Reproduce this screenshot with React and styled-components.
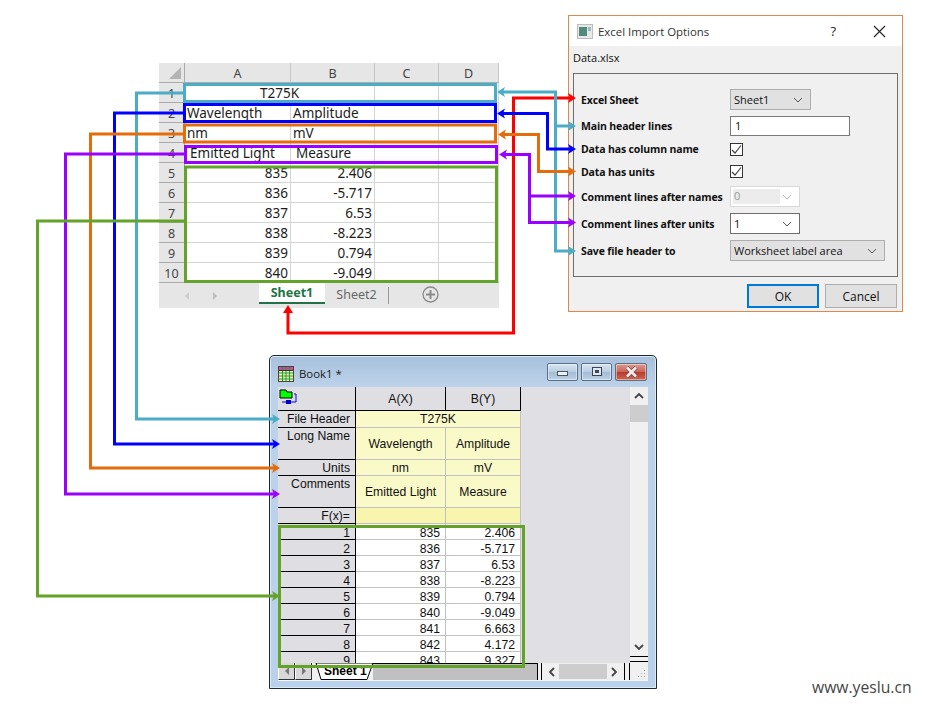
import React from 'react';
import styled, { createGlobalStyle } from 'styled-components';

const Global = createGlobalStyle`
  html, body { margin: 0; padding: 0; background: #fff; }
  * { box-sizing: border-box; }
`;

const Canvas = styled.div`
  position: relative;
  width: 925px;
  height: 706px;
  overflow: hidden;
  background: #fff;
`;

/* ---------- Excel ---------- */
const ExcelWindow = styled.div`
  position: absolute;
  left: 159px;
  top: 63px;
  width: 340px;
  height: 245px;
  background: #e6e6e6;
  display: flex;
  flex-direction: column;
  font-family: "Noto Sans", sans-serif;
`;
const ExcelGrid = styled.div`
  display: grid;
  grid-template-columns: 26px 106px 84px 64px 60px;
  grid-template-rows: 20px repeat(10, 20px);
  height: 219px;
  overflow: hidden;
  background: #fff;
  font-size: 13.5px;
  color: #1c1c1c;
`;
const ColHead = styled.div`
  background: #e6e6e6;
  border-right: 1px solid #c6c6c6;
  border-bottom: 1px solid #ababab;
  display: flex;
  align-items: center;
  justify-content: center;
  color: #444;
  font-size: 12.5px;
  padding-top: 2px;
`;
const Corner = styled.div`
  background: #e6e6e6;
  border-right: 1px solid #ababab;
  border-bottom: 1px solid #ababab;
  display: flex;
  align-items: flex-end;
  justify-content: flex-end;
  padding: 0 3px 3px 0;
`;
const RowHead = styled.div`
  background: #e6e6e6;
  border-right: 1px solid #ababab;
  border-bottom: 1px solid #ababab;
  display: flex;
  align-items: center;
  justify-content: center;
  color: #444;
  font-size: 12.5px;
  padding-top: 2px;
`;
const XCell = styled.div`
  border-right: 1px solid #d4d4d4;
  border-bottom: 1px solid #d4d4d4;
  display: flex;
  align-items: center;
  white-space: nowrap;
  overflow: hidden;
  grid-column: ${p => (p.$span ? `span ${p.$span}` : 'auto')};
  justify-content: ${p => (p.$align === 'right' ? 'flex-end' : p.$align === 'center' ? 'center' : 'flex-start')};
  padding: 2px 2px 0 ${p => p.$indent || 2}px;
  line-height: 1;
`;
const TabBar = styled.div`
  flex: 1;
  display: flex;
  align-items: flex-start;
  border-top: 1px solid #ababab;
  font-size: 12.5px;
`;
const NavArrows = styled.div`
  width: 100px;
  height: 100%;
  display: flex;
  align-items: center;
  gap: 22px;
  padding-left: 25px;
`;
const ActiveTab = styled.div`
  width: 66px;
  height: 21px;
  background: #fff;
  border-bottom: 2px solid #217346;
  color: #217346;
  font-weight: 700;
  text-align: center;
  line-height: 19px;
`;
const IdleTab = styled.div`
  width: 64px;
  height: 17px;
  margin-top: 4px;
  color: #666;
  text-align: center;
  line-height: 15px;
  border-right: 1px solid #9a9a9a;
`;
const AddSheet = styled.div`
  margin: 3px 0 0 33px;
  display: flex;
`;

/* ---------- Dialog ---------- */
const Dialog = styled.div`
  position: absolute;
  left: 568px;
  top: 15px;
  width: 335px;
  height: 297px;
  border: 1px solid #d98a4c;
  background: #f0f0f0;
  display: flex;
  flex-direction: column;
  font-family: "Open Sans", sans-serif;
  color: #111;
`;
const DialogTitle = styled.div`
  height: 30px;
  background: #fff;
  display: flex;
  align-items: center;
  padding: 0 16px 0 8px;
  font-size: 11.4px;
  color: #333;
`;
const TitleText = styled.span`
  margin-left: 5px;
  flex: 1;
`;
const Help = styled.span`
  font-size: 13px;
  margin-right: 37px;
  color: #222;
`;
const FileName = styled.div`
  font-size: 11px;
  padding: 4px 0 0 4px;
  height: 27px;
  line-height: 16px;
`;
const GroupBox = styled.div`
  margin-left: 4px;
  width: 325px;
  height: 204px;
  border: 1px solid #6e6e6e;
  padding-top: 12px;
  display: flex;
  flex-direction: column;
`;
const OptionRow = styled.div`
  display: grid;
  grid-template-columns: 149px 1fr;
  align-items: center;
  height: ${p => p.$h}px;
  padding-left: 7px;
`;
const OptionLabel = styled.span`
  font-size: 10.5px;
  font-weight: 700;
  letter-spacing: -0.15px;
  white-space: nowrap;
`;
const SelectBox = styled.div`
  width: ${p => p.$w}px;
  height: ${p => p.$h || 21}px;
  display: flex;
  align-items: center;
  justify-content: space-between;
  padding: 0 7px 0 3px;
  font-size: 11px;
  background: ${p => (p.$variant === 'white' ? '#fff' : p.$variant === 'off' ? '#fff' : '#e1e1e1')};
  border: 1px solid ${p => (p.$variant === 'white' ? '#6e6e6e' : p.$variant === 'off' ? '#d9d9d9' : '#adadad')};
  color: ${p => (p.$variant === 'off' ? '#9a9a9a' : '#111')};
`;
const OffValue = styled.span`
  background: #ececec;
  width: 47px;
  height: 15px;
  line-height: 14px;
  margin-left: -1px;
  padding-left: 1px;
`;
const TextBox = styled.div`
  width: 120px;
  height: 20px;
  background: #fff;
  border: 1px solid #7a7a7a;
  padding-left: 4px;
  font-size: 11px;
  line-height: 17px;
`;
const Check = styled.div`
  width: 13px;
  height: 13px;
  background: #fff;
  border: 1px solid #333;
  display: flex;
  align-items: center;
  justify-content: center;
`;
const ButtonRow = styled.div`
  display: flex;
  justify-content: flex-end;
  gap: 6px;
  margin: 7px 5px 0 0;
`;
const DlgButton = styled.div`
  width: 72px;
  height: 24px;
  background: #e1e1e1;
  border: ${p => (p.$primary ? '2px solid #0078d7' : '1px solid #adadad')};
  font-size: 12px;
  display: flex;
  align-items: center;
  justify-content: center;
`;

/* ---------- Origin ---------- */
const BookWindow = styled.div`
  position: absolute;
  left: 269px;
  top: 355px;
  width: 388px;
  height: 334px;
  border: 1px solid #1c2a33;
  border-radius: 5px 5px 0 0;
  background: linear-gradient(180deg, #a6c0dc 0, #bcd2e9 30px, #b9d1ea 100%);
  padding: 0 8px 7px;
  display: flex;
  flex-direction: column;
  box-shadow: inset 0 0 0 1px #dbe8f5;
`;
const BookTitle = styled.div`
  height: 31px;
  flex: none;
  display: flex;
  align-items: center;
  padding-top: 4px;
  font-family: "Open Sans", sans-serif;
  font-size: 11.4px;
  color: #1a1a1a;
`;
const BookName = styled.span`
  margin-left: 5px;
  flex: 1;
`;
const WinButtons = styled.div`
  display: flex;
  gap: 3px;
  margin: -4px 1px 0 0;
`;
const WinButton = styled.div`
  width: ${p => (p.$close ? 32 : 31)}px;
  height: 18px;
  border: 1px solid #5c6f83;
  border-radius: 2px;
  box-shadow: inset 0 0 0 1px rgba(255, 255, 255, 0.45);
  background: ${p =>
    p.$close
      ? 'linear-gradient(180deg, #dd9a90 0, #c9665a 48%, #b83a2c 52%, #cc6a58 100%)'
      : 'linear-gradient(180deg, #d7e4f2 0, #b9cde2 48%, #a4bcd6 52%, #bcd0e6 100%)'};
  display: flex;
  align-items: center;
  justify-content: center;
`;
const BookBody = styled.div`
  flex: 1;
  background: #dfdfe4;
  display: flex;
  flex-direction: column;
  border: 1px solid #f4f8fc;
  border-width: 0 0 1px 0;
  min-height: 0;
`;
const BookMain = styled.div`
  height: 276px;
  flex: none;
  display: flex;
  justify-content: space-between;
`;
const SheetGrid = styled.div`
  display: grid;
  grid-template-columns: 78px 90px 75px;
  grid-template-rows: 24px 17px 32px 16px 32px 16px repeat(10, 16px);
  height: 276px;
  overflow: hidden;
  font-family: "Liberation Sans", sans-serif;
  font-size: 12.2px;
  color: #111;
`;
const SideCell = styled.div`
  background: #dedee3;
  border-right: 1px solid #000;
  border-bottom: 1px solid #000;
  display: flex;
  justify-content: flex-end;
  align-items: ${p => (p.$top ? 'flex-start' : 'center')};
  padding: ${p => (p.$top ? '1px' : p.$data ? '2px' : '0')} 5px 0 0;
  line-height: 14px;
  white-space: nowrap;
`;
const CornerCell = styled(SideCell)`
  justify-content: flex-start;
  align-items: flex-start;
  padding: 2px 0 0 1px;
`;
const HeadCell = styled.div`
  background: #dedee3;
  border-right: 1px solid #000;
  border-bottom: 1px solid #000;
  display: flex;
  align-items: center;
  justify-content: center;
`;
const MetaCell = styled.div`
  background: ${p => p.$bg || '#fafac8'};
  border-right: 1px solid #c0c0c0;
  border-bottom: 1px solid #c0c0c0;
  display: flex;
  align-items: center;
  justify-content: center;
  white-space: nowrap;
  grid-column: ${p => (p.$span ? `span ${p.$span}` : 'auto')};
`;
const DataCell = styled.div`
  background: #fff;
  border-right: 1px solid #c0c0c0;
  border-bottom: 1px solid #c0c0c0;
  display: flex;
  align-items: center;
  justify-content: flex-end;
  padding: 2px 5px 0 0;
`;
const VScroll = styled.div`
  width: 18px;
  background: #f0f0f0;
  display: flex;
  flex-direction: column;
  align-items: stretch;
`;
const ScrollArrowBox = styled.div`
  height: 18px;
  display: flex;
  align-items: center;
  justify-content: center;
`;
const ScrollThumb = styled.div`
  height: 17px;
  background: #cdcdcd;
`;
const ScrollFill = styled.div`
  flex: 1;
`;
const Splitter = styled.div`
  height: 6px;
  border-top: 1px solid #000;
  border-bottom: 1px solid #000;
  margin: 0 0 1px 0;
  background: #f0f0f0;
`;
const BottomBar = styled.div`
  height: 17px;
  flex: none;
  display: flex;
  background: #f0f0f0;
  font-family: "Liberation Sans", sans-serif;
`;
const NavBtn = styled.div`
  width: 17px;
  height: 100%;
  background: #d8d8d8;
  border-right: 1px solid #333;
  border-bottom: 1px solid #333;
  border-left: 1px solid #fff;
  display: flex;
  align-items: center;
  justify-content: center;
`;
const SheetTab = styled.div`
  position: relative;
  width: 60px;
  height: 100%;
  margin-left: 3px;
  flex: none;
  font-size: 12px;
  font-weight: 700;
  line-height: 17px;
  padding-left: 9px;
  color: #000;
`;
const TabShape = styled.svg`
  position: absolute;
  left: 0;
  top: 0;
`;
const TabLabel = styled.span`
  position: relative;
`;
const TabTrough = styled.div`
  flex: 1;
  background: #c0c0c0;
  margin-left: -2px;
  border-top: 1px solid #000;
`;
const Divider = styled.div`
  width: ${p => p.$w}px;
  flex: none;
  border-left: 1px solid #000;
  border-right: 1px solid #000;
`;
const HScroll = styled.div`
  width: 82px;
  flex: none;
  display: flex;
  align-items: center;
  justify-content: space-between;
  padding: 0 5px;
  background: #f0f0f0;
`;
const HThumb = styled.div`
  width: 48px;
  height: 15px;
  background: #cdcdcd;
`;
const Sizer = styled.div`
  flex: none;
  width: 18px;
  display: flex;
  align-items: flex-end;
  justify-content: flex-end;
  padding: 0 2px 2px 0;
`;

const Watermark = styled.div`
  position: absolute;
  left: 812px;
  top: 676px;
  font-family: "Open Sans", sans-serif;
  font-size: 15.7px;
  color: #444;
`;

const Overlay = styled.svg`
  position: absolute;
  left: 0;
  top: 0;
  pointer-events: none;
`;

/* ---------- drawings ---------- */
const Chevron = ({ color = '#555', size = 10, dir = 'down', sw = 1 }) => {
  const d = {
    down: 'M1 3 L5 7 L9 3',
    up: 'M1 7 L5 3 L9 7',
    left: 'M7 1 L3 5 L7 9',
    right: 'M3 1 L7 5 L3 9',
  }[dir];
  return (
    <svg width={size} height={size} viewBox="0 0 10 10">
      <path d={d} fill="none" stroke={color} strokeWidth={sw} />
    </svg>
  );
};

const Tick = () => (
  <svg width="11" height="11" viewBox="0 0 11 11">
    <path d="M1 6 L4 9 L10 1.5" fill="none" stroke="#444" strokeWidth="1.2" />
  </svg>
);

const Arrow = ({ color, x, y, dir }) => {
  const s = dir === 'r' ? 1 : -1;
  if (dir === 'u') {
    return <polygon fill={color} points={`${x},${y} ${x - 5},${y + 8} ${x + 5},${y + 8}`} />;
  }
  return (
    <polygon
      fill={color}
      points={`${x},${y} ${x - s * 8},${y - 5} ${x - s * 6},${y} ${x - s * 8},${y + 5}`}
    />
  );
};

const LB = '#4bacc6';
const BL = '#0000ff';
const OR = '#e46c0a';
const PU = '#9900ff';
const GR = '#63a32a';
const RD = '#ff0000';

const Line = ({ c, p }) => (
  <polyline points={p} fill="none" stroke={c} strokeWidth="3" />
);
const Frame = ({ c, x, y, w, h }) => (
  <rect x={x} y={y} width={w} height={h} fill="none" stroke={c} strokeWidth="3" />
);

const Connectors = () => (
  <Overlay width="925" height="706" viewBox="0 0 925 706">
    <Frame c={LB} x={184.5} y={84.5} w={311} h={17} />
    <Frame c={BL} x={184.5} y={104.5} w={311} h={17} />
    <Frame c={OR} x={184.5} y={125} w={311} h={17} />
    <Frame c={PU} x={185.5} y={146.5} w={311} h={16} />
    <Frame c={GR} x={185.5} y={167} w={311} h={114.5} />
    <Frame c={GR} x={279.5} y={526.5} w={244} h={140} />

    <Line c={LB} p="184,93 136.5,93 136.5,419 274,419" />
    <Arrow color={LB} x={280} y={419} dir="r" />
    <Line c={BL} p="184,113 114.5,113 114.5,444 274,444" />
    <Arrow color={BL} x={280} y={444} dir="r" />
    <Line c={OR} p="184,134 90.5,134 90.5,468 274,468" />
    <Arrow color={OR} x={280} y={468} dir="r" />
    <Line c={PU} p="184,154 65.5,154 65.5,494 274,494" />
    <Arrow color={PU} x={280} y={494} dir="r" />
    <Line c={GR} p="184,221 37.5,221 37.5,596 274,596" />
    <Arrow color={GR} x={280} y={596} dir="r" />

    <Line c={RD} p="288,312 288,333 513.5,333 513.5,98 571,98" />
    <Arrow color={RD} x={288} y={305} dir="u" />
    <Arrow color={RD} x={576} y={98} dir="r" />

    <Line c={LB} p="503,92 555.5,92 555.5,251 571,251" />
    <Line c={LB} p="555,126 571,126" />
    <Arrow color={LB} x={497} y={92} dir="l" />
    <Arrow color={LB} x={576} y={126} dir="r" />
    <Arrow color={LB} x={576} y={251} dir="r" />

    <Line c={BL} p="503,113.5 547.5,113.5 547.5,149 571,149" />
    <Arrow color={BL} x={497} y={113.5} dir="l" />
    <Arrow color={BL} x={576} y={149} dir="r" />

    <Line c={OR} p="504,134.5 538.5,134.5 538.5,171.5 571,171.5" />
    <Arrow color={OR} x={498} y={134.5} dir="l" />
    <Arrow color={OR} x={576} y={171.5} dir="r" />

    <Line c={PU} p="505,154.5 529.5,154.5 529.5,222.5 571,222.5" />
    <Line c={PU} p="529,196 571,196" />
    <Arrow color={PU} x={499} y={154.5} dir="l" />
    <Arrow color={PU} x={576} y={196} dir="r" />
    <Arrow color={PU} x={576} y={222.5} dir="r" />
  </Overlay>
);

/* ---------- data ---------- */
const excelRows = [
  ['835', '2.406'],
  ['836', '-5.717'],
  ['837', '6.53'],
  ['838', '-8.223'],
  ['839', '0.794'],
  ['840', '-9.049'],
];
const bookRows = [
  ['835', '2.406'],
  ['836', '-5.717'],
  ['837', '6.53'],
  ['838', '-8.223'],
  ['839', '0.794'],
  ['840', '-9.049'],
  ['841', '6.663'],
  ['842', '4.172'],
  ['843', '9.327'],
];

const Excel = () => (
  <ExcelWindow>
    <ExcelGrid>
      <Corner>
        <svg width="12" height="12" viewBox="0 0 12 12">
          <polygon points="12,0 12,12 0,12" fill="#b4b4b4" />
        </svg>
      </Corner>
      {['A', 'B', 'C', 'D'].map(c => <ColHead key={c}>{c}</ColHead>)}

      <RowHead>1</RowHead>
      <XCell $span={2} $align="center">T275K</XCell>
      <XCell /><XCell />

      <RowHead>2</RowHead>
      <XCell $indent={2}>Wavelength</XCell>
      <XCell $indent={2}>Amplitude</XCell>
      <XCell /><XCell />

      <RowHead>3</RowHead>
      <XCell $indent={2}>nm</XCell>
      <XCell $indent={2}>mV</XCell>
      <XCell /><XCell />

      <RowHead>4</RowHead>
      <XCell $indent={5}>Emitted Light</XCell>
      <XCell $indent={5}>Measure</XCell>
      <XCell /><XCell />

      {excelRows.map((r, i) => (
        <React.Fragment key={r[0]}>
          <RowHead>{i + 5}</RowHead>
          <XCell $align="right">{r[0]}</XCell>
          <XCell $align="right">{r[1]}</XCell>
          <XCell /><XCell />
        </React.Fragment>
      ))}
    </ExcelGrid>
    <TabBar>
      <NavArrows>
        <svg width="6" height="8" viewBox="0 0 6 8"><polygon points="5,0 5,8 1,4" fill="#cfcfcf" /></svg>
        <svg width="6" height="8" viewBox="0 0 6 8"><polygon points="1,0 1,8 5,4" fill="#bdbdbd" /></svg>
      </NavArrows>
      <ActiveTab>Sheet1</ActiveTab>
      <IdleTab>Sheet2</IdleTab>
      <AddSheet>
        <svg width="17" height="17" viewBox="0 0 17 17">
          <circle cx="8.5" cy="8.5" r="7.5" fill="none" stroke="#8a8a8a" strokeWidth="1.3" />
          <path d="M8.5 4 V13 M4 8.5 H13" stroke="#8a8a8a" strokeWidth="2" />
        </svg>
      </AddSheet>
    </TabBar>
  </ExcelWindow>
);

const ImportDialog = () => (
  <Dialog>
    <DialogTitle>
      <svg width="16" height="15" viewBox="0 0 16 15">
        <rect x="0.5" y="0.5" width="15" height="14" fill="#e8e8e8" stroke="#bdbdbd" />
        <rect x="2" y="3" width="8" height="9" fill="#4f8a7a" />
        <rect x="11" y="3" width="3" height="4" fill="#9db8c8" />
      </svg>
      <TitleText>Excel Import Options</TitleText>
      <Help>?</Help>
      <svg width="13" height="13" viewBox="0 0 13 13">
        <path d="M1 1 L12 12 M12 1 L1 12" stroke="#222" strokeWidth="1.1" />
      </svg>
    </DialogTitle>
    <FileName>Data.xlsx</FileName>
    <GroupBox>
      <OptionRow $h={27}>
        <OptionLabel>Excel Sheet</OptionLabel>
        <SelectBox $w={81}>Sheet1<Chevron /></SelectBox>
      </OptionRow>
      <OptionRow $h={25}>
        <OptionLabel>Main header lines</OptionLabel>
        <TextBox>1</TextBox>
      </OptionRow>
      <OptionRow $h={22}>
        <OptionLabel>Data has column name</OptionLabel>
        <Check><Tick /></Check>
      </OptionRow>
      <OptionRow $h={23}>
        <OptionLabel>Data has units</OptionLabel>
        <Check><Tick /></Check>
      </OptionRow>
      <OptionRow $h={27}>
        <OptionLabel>Comment lines after names</OptionLabel>
        <SelectBox $w={70} $variant="off"><OffValue>0</OffValue><Chevron color="#bbb" /></SelectBox>
      </OptionRow>
      <OptionRow $h={27}>
        <OptionLabel>Comment lines after units</OptionLabel>
        <SelectBox $w={70} $variant="white">1<Chevron /></SelectBox>
      </OptionRow>
      <OptionRow $h={27}>
        <OptionLabel>Save file header to</OptionLabel>
        <SelectBox $w={155}>Worksheet label area<Chevron /></SelectBox>
      </OptionRow>
    </GroupBox>
    <ButtonRow>
      <DlgButton $primary>OK</DlgButton>
      <DlgButton>Cancel</DlgButton>
    </ButtonRow>
  </Dialog>
);

const SheetIcon = () => (
  <svg width="16" height="16" viewBox="0 0 16 16">
    <rect x="0.5" y="0.5" width="15" height="15" fill="#f6f6a8" stroke="#444" />
    <rect x="1" y="1" width="14" height="3" fill="#c84aa0" />
    <path d="M1 7 H15 M1 10 H15 M1 13 H15 M4.5 1 V15 M8 1 V15 M11.5 1 V15" stroke="#1f9a3a" strokeWidth="1" />
    <path d="M1 4.5 H15" stroke="#333" />
  </svg>
);

const FolderIcon = () => (
  <svg width="18" height="18" viewBox="0 0 18 18">
    <path d="M1 1 H7 L8 3 H13 V9 H1 Z" fill="#00ff00" stroke="#000" strokeWidth="1" />
    <path d="M15 5 H17 V13 H9" fill="none" stroke="#0000ff" />
    <rect x="7" y="11" width="5" height="4" fill="#0000c8" />
    <path d="M3 13 H7" stroke="#0000ff" />
  </svg>
);

const Book = () => (
  <BookWindow>
    <BookTitle>
      <SheetIcon />
      <BookName>Book1 *</BookName>
      <WinButtons>
        <WinButton>
          <svg width="12" height="8" viewBox="0 0 12 8">
            <rect x="0.5" y="3.5" width="10" height="4" fill="#eef2f6" stroke="#4a5866" />
          </svg>
        </WinButton>
        <WinButton>
          <svg width="12" height="10" viewBox="0 0 12 10">
            <rect x="1.5" y="0.5" width="9" height="8" fill="#dfe8f2" stroke="#3a4652" />
            <rect x="4" y="3" width="4" height="3" fill="#3a4652" />
          </svg>
        </WinButton>
        <WinButton $close>
          <svg width="15" height="12" viewBox="0 0 15 12">
            <path d="M3 1.5 L12 10.5 M12 1.5 L3 10.5" stroke="#7a4a44" strokeWidth="4" />
            <path d="M3 1.5 L12 10.5 M12 1.5 L3 10.5" stroke="#eee" strokeWidth="2.6" />
          </svg>
        </WinButton>
      </WinButtons>
    </BookTitle>
    <BookBody>
      <BookMain>
        <SheetGrid>
          <CornerCell><FolderIcon /></CornerCell>
          <HeadCell>A(X)</HeadCell>
          <HeadCell>B(Y)</HeadCell>

          <SideCell>File Header</SideCell>
          <MetaCell $span={2}>T275K</MetaCell>

          <SideCell $top>Long Name</SideCell>
          <MetaCell>Wavelength</MetaCell>
          <MetaCell>Amplitude</MetaCell>

          <SideCell>Units</SideCell>
          <MetaCell>nm</MetaCell>
          <MetaCell>mV</MetaCell>

          <SideCell $top>Comments</SideCell>
          <MetaCell>Emitted Light</MetaCell>
          <MetaCell>Measure</MetaCell>

          <SideCell>F(x)=</SideCell>
          <MetaCell $bg="#f7f5ae" />
          <MetaCell $bg="#f7f5ae" />

          {bookRows.map((r, i) => (
            <React.Fragment key={r[0]}>
              <SideCell $data>{i + 1}</SideCell>
              <DataCell>{r[0]}</DataCell>
              <DataCell>{r[1]}</DataCell>
            </React.Fragment>
          ))}
        </SheetGrid>
        <VScroll>
          <ScrollArrowBox><Chevron color="#444" dir="up" sw={1.8} /></ScrollArrowBox>
          <ScrollThumb />
          <ScrollFill />
          <ScrollArrowBox><Chevron color="#444" dir="down" sw={1.8} /></ScrollArrowBox>
          <Splitter />
        </VScroll>
      </BookMain>
      <BottomBar>
        <NavBtn>
          <svg width="6" height="8" viewBox="0 0 6 8"><polygon points="5,0 5,8 1,4" fill="#777" /></svg>
        </NavBtn>
        <NavBtn>
          <svg width="6" height="8" viewBox="0 0 6 8"><polygon points="1,0 1,8 5,4" fill="#777" /></svg>
        </NavBtn>
        <SheetTab>
          <TabShape width="60" height="17" viewBox="0 0 60 17">
            <path d="M1 0 L6 16.5 H52 L58 0 Z" fill="#fff" stroke="#000" />
          </TabShape>
          <TabLabel>Sheet 1</TabLabel>
        </SheetTab>
        <TabTrough />
        <Divider $w={5} />
        <HScroll>
          <Chevron color="#444" dir="left" sw={1.8} />
          <HThumb />
          <Chevron color="#444" dir="right" sw={1.8} />
        </HScroll>
        <Divider $w={6} />
        <Sizer>
          <svg width="9" height="9" viewBox="0 0 9 9">
            <path d="M7 1 h1 v1 h-1z M4 4 h1 v1 h-1z M7 4 h1 v1 h-1z M1 7 h1 v1 h-1z M4 7 h1 v1 h-1z M7 7 h1 v1 h-1z" fill="#aaa" />
          </svg>
        </Sizer>
      </BottomBar>
    </BookBody>
  </BookWindow>
);

export default function App() {
  return (
    <Canvas>
      <Global />
      <Excel />
      <ImportDialog />
      <Book />
      <Connectors />
      <Watermark>www.yeslu.cn</Watermark>
    </Canvas>
  );
}
